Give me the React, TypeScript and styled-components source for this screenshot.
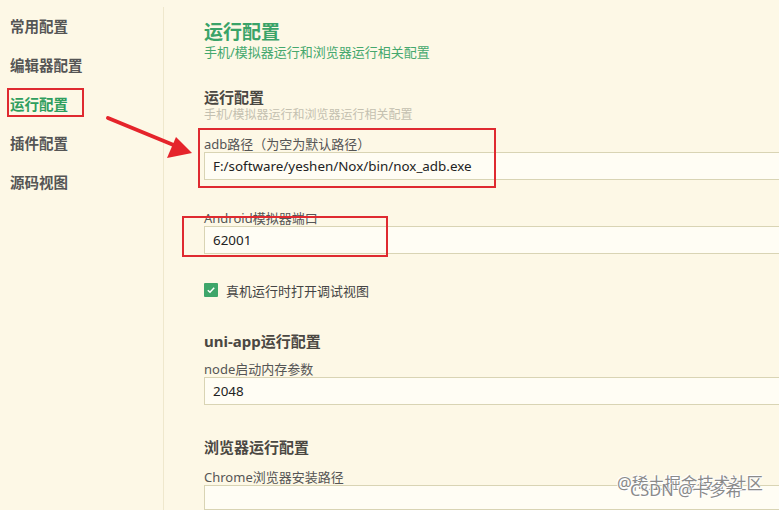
import React from "react";
import styled, { createGlobalStyle } from "styled-components";

const GlobalStyle = createGlobalStyle`
  html, body {
    margin: 0;
    padding: 0;
    background: #fdf8e6;
  }
  body {
    font-family: "Noto Sans", "Noto Sans CJK SC", sans-serif;
    overflow: hidden;
  }
`;

const menu = ["常用配置", "编辑器配置", "运行配置", "插件配置", "源码视图"];

const App = () => {
  return (
    <>
      <GlobalStyle />
      <Page>
        <Sidebar>
          {menu.map((m) => (
            <MenuItem key={m} $active={m === "运行配置"}>
              {m}
            </MenuItem>
          ))}
        </Sidebar>
        <Main>
          <Title>运行配置</Title>
          <Subtitle>手机/模拟器运行和浏览器运行相关配置</Subtitle>

          <SectionHeader $top={27}>运行配置</SectionHeader>
          <SectionHint>手机/模拟器运行和浏览器运行相关配置</SectionHint>

          <Label $top={13}>adb路径（为空为默认路径）</Label>
          <Input>F:/software/yeshen/Nox/bin/nox_adb.exe</Input>

          <Label $top={30}>Android模拟器端口</Label>
          <Input>62001</Input>

          <CheckRow>
            <CheckBox>
              <svg width="10" height="10" viewBox="0 0 10 10">
                <path d="M1.8 5.2 L4 7.2 L8.2 2.8" fill="none" stroke="#fff" strokeWidth="1.5" />
              </svg>
            </CheckBox>
            <CheckText>真机运行时打开调试视图</CheckText>
          </CheckRow>

          <SectionHeader $top={34}>uni-app运行配置</SectionHeader>
          <Label $top={10}>node启动内存参数</Label>
          <Input>2048</Input>

          <SectionHeader $top={32}>浏览器运行配置</SectionHeader>
          <Label $top={12}>Chrome浏览器安装路径</Label>
          <Input />
        </Main>

        <MarkBox style={{ left: 7, top: 88, width: 77, height: 29 }} />
        <MarkBox style={{ left: 198, top: 128, width: 298, height: 60 }} />
        <MarkBox style={{ left: 182, top: 216, width: 206, height: 41 }} />
        <Arrow width="779" height="510" viewBox="0 0 779 510">
          <line x1="108" y1="118" x2="176" y2="146" stroke="#e5242b" strokeWidth="4" strokeLinecap="round" />
          <polygon points="192,153 167,158 176,137" fill="#e5242b" />
        </Arrow>

        <Watermark>
          <span>@稀土掘金技术社区</span>
          <span className="second">CSDN @卡多希</span>
        </Watermark>
      </Page>
    </>
  );
};

export default App;

const Page = styled.div`
  position: relative;
  display: flex;
  width: 779px;
  height: 510px;
  overflow: hidden;
  background: #fdf8e6;
`;

const Sidebar = styled.div`
  width: 163px;
  flex-shrink: 0;
  margin-top: 7px;
  border-right: 1px solid #efe8cd;
  display: flex;
  flex-direction: column;
`;

const MenuItem = styled.div<{ $active?: boolean }>`
  height: 39px;
  line-height: 39px;
  padding-left: 10px;
  font-size: 14.5px;
  font-weight: bold;
  color: ${(p) => (p.$active ? "#2f9e5e" : "#555555")};
`;

const Main = styled.div`
  flex: 1;
  padding-left: 40px;
  padding-top: 20px;
  display: flex;
  flex-direction: column;
  min-width: 0;
`;

const Title = styled.div`
  font-size: 19px;
  line-height: 24px;
  font-weight: bold;
  color: #3aa368;
`;

const Subtitle = styled.div`
  font-size: 13px;
  line-height: 16px;
  color: #45a86e;
`;

const SectionHeader = styled.div<{ $top: number }>`
  margin-top: ${(p) => p.$top}px;
  font-size: 15px;
  line-height: 20px;
  font-weight: bold;
  color: #4a4742;
`;

const SectionHint = styled.div`
  font-size: 12px;
  line-height: 16px;
  color: #c4c0b0;
`;

const Label = styled.div<{ $top: number }>`
  margin-top: ${(p) => p.$top}px;
  font-size: 13px;
  line-height: 16px;
  color: #555;
`;

const Input = styled.div`
  box-sizing: border-box;
  width: 640px;
  height: 28px;
  line-height: 26px;
  padding-left: 8px;
  border: 1px solid #d9d4b4;
  background: #fffdf4;
  font-size: 13.4px;
  color: #222;
`;

const CheckRow = styled.div`
  margin-top: 29px;
  display: flex;
  align-items: center;
  gap: 8px;
  height: 14px;
`;

const CheckBox = styled.div`
  width: 14px;
  height: 14px;
  border-radius: 1px;
  background: #3ea66a;
  display: flex;
  align-items: center;
  justify-content: center;
`;

const CheckText = styled.div`
  font-size: 13px;
  color: #444;
`;

const MarkBox = styled.div`
  position: absolute;
  box-sizing: border-box;
  border: 2px solid #df2a30;
  pointer-events: none;
`;

const Arrow = styled.svg`
  position: absolute;
  left: 0;
  top: 0;
  pointer-events: none;
`;

const Watermark = styled.div`
  position: absolute;
  left: 617px;
  top: 473px;
  font-size: 16.4px;
  color: #8a8a8a;
  text-shadow: 0 0 1px #fff, 1px 1px 0 #fff, -1px -1px 0 #fff;
  line-height: 20px;
  span {
    display: block;
  }
  .second {
    margin-top: -13px;
    margin-left: 13px;
  }
`;
